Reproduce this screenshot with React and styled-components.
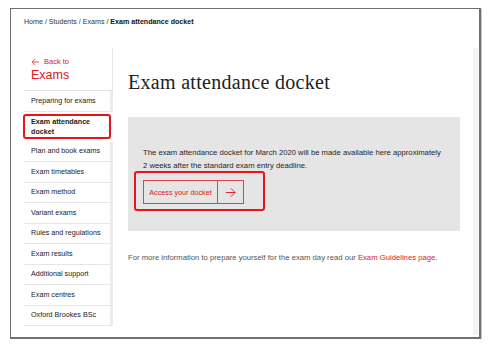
import React from "react";
import styled, { createGlobalStyle } from "styled-components";

const Global = createGlobalStyle`
  html, body { margin: 0; padding: 0; background: #fff; }
  body { font-family: "Liberation Sans", Arial, sans-serif; }
  * { box-sizing: border-box; }
`;

const Frame = styled.div`
  margin: 8px 0 0 10px;
  width: 471px;
  height: 331px;
  border: 1px solid #6e6e6e;
  border-right: 2px solid #707070;
  border-bottom: 2px solid #707070;
  box-shadow: 1px 1px 0 #c8c8c8;
  display: flex;
  flex-direction: column;
  padding: 0 0 0 13px;
  position: relative;
  overflow: hidden;
`;

const Breadcrumb = styled.div`
  height: 39px;
  padding-top: 9px;
  font-size: 7.1px;
  color: #333;
  line-height: 9px;
  b { color: #111; font-weight: bold; }
`;

const Body = styled.div`
  display: flex;
  flex: 1;
`;

const Sidebar = styled.nav`
  width: 89px;
  display: flex;
  flex-direction: column;
`;

const BackBlock = styled.div`
  height: 43px;
  padding: 8px 0 0 7px;
  border-right: 1px solid #e6e6e6;
  color: #e0141e;
  border-bottom: 1px solid #e3e3e3;
`;

const BackLink = styled.div`
  font-size: 7.5px;
  line-height: 11px;
  display: flex;
  align-items: center;
  gap: 4px;
`;

const BackTitle = styled.div`
  font-size: 12.5px;
  line-height: 15px;
  margin-top: 1px;
`;

const Item = styled.div`
  height: ${(p) => (p.$tall ? "30px" : "20.5px")};
  display: flex;
  align-items: center;
  padding-left: 7px;
  font-size: 7.2px;
  line-height: 10px;
  color: #222;
  font-weight: ${(p) => (p.$active ? "bold" : "normal")};
  border-bottom: ${(p) => (p.$active ? "none" : "1px solid #e6e6e6")};
  border-right: ${(p) => (p.$active ? "none" : "3px solid #ececec")};
  position: relative;
`;

const Highlight = styled.span`
  position: absolute;
  left: -1px;
  right: 2px;
  top: 2px;
  bottom: 3px;
  border: 2px solid #e8161c;
  border-radius: 3px;
`;

const Main = styled.main`
  margin-left: 15px;
  width: 332px;
  display: flex;
  flex-direction: column;
`;

const Title = styled.h1`
  margin: 22px 0 0 0;
  font-family: "Liberation Serif", "Times New Roman", serif;
  font-weight: normal;
  font-size: 20px;
  line-height: 24px;
  color: #222;
  letter-spacing: 0.3px;
`;

const Panel = styled.section`
  margin-top: 23px;
  background: #e5e5e5;
  height: 114px;
  padding: 29px 15px 0 15px;
`;

const PanelText = styled.p`
  margin: 0;
  font-size: 7.7px;
  line-height: 13px;
  color: #1e1e1e;
`;

const ButtonWrap = styled.div`
  position: relative;
  margin-top: 8px;
  width: 101px;
`;

const Button = styled.a`
  display: flex;
  height: 24px;
  width: 101px;
  border: 1px solid #d9454a;
  color: #e0141e;
  font-size: 7.2px;
`;

const ButtonLabel = styled.span`
  flex: 1;
  display: flex;
  align-items: center;
  justify-content: center;
  border-right: 1px solid #d9454a;
`;

const ButtonArrow = styled.span`
  width: 25px;
  display: flex;
  align-items: center;
  justify-content: center;
`;

const ButtonHighlight = styled.span`
  position: absolute;
  left: -9px;
  top: -9px;
  width: 131px;
  height: 40px;
  border: 2px solid #e8161c;
  border-radius: 3px;
`;

const Footer = styled.p`
  margin: 22px 0 0 0;
  font-size: 7.7px;
  line-height: 10px;
  color: #555;
  a { color: #e0141e; text-decoration: none; }
`;

const RightStrip = styled.div`
  position: absolute;
  right: 1px;
  top: 39px;
  bottom: 2px;
  width: 5px;
  background: #f3f3f3;
`;

const Arrow = ({ size = 10, w = 1 }) => (
  <svg width={size} height={size} viewBox="0 0 12 12" fill="none" stroke="currentColor" strokeWidth={w}>
    <path d="M1 6h10M6.5 1.5 11 6l-4.5 4.5" />
  </svg>
);

const BackArrow = () => (
  <svg width="9" height="8" viewBox="0 0 12 12" fill="none" stroke="currentColor" strokeWidth="1.1">
    <path d="M11 6H1M5.5 1.5 1 6l4.5 4.5" />
  </svg>
);

const items = [
  "Plan and book exams",
  "Exam timetables",
  "Exam method",
  "Variant exams",
  "Rules and regulations",
  "Exam results",
  "Additional support",
  "Exam centres",
  "Oxford Brookes BSc",
];

export default function App() {
  return (
    <>
      <Global />
      <Frame>
        <Breadcrumb>
          Home / Students / Exams / <b>Exam attendance docket</b>
        </Breadcrumb>
        <Body>
          <Sidebar>
            <BackBlock>
              <BackLink>
                <BackArrow /> Back to
              </BackLink>
              <BackTitle>Exams</BackTitle>
            </BackBlock>
            <Item>Preparing for exams</Item>
            <Item $tall $active>
              Exam attendance
              <br />
              docket
              <Highlight />
            </Item>
            {items.map((t) => (
              <Item key={t}>{t}</Item>
            ))}
          </Sidebar>
          <Main>
            <Title>Exam attendance docket</Title>
            <Panel>
              <PanelText>
                The exam attendance docket for March 2020 will be made available here approximately
                <br />2 weeks after the standard exam entry deadline.
              </PanelText>
              <ButtonWrap>
                <Button>
                  <ButtonLabel>Access your docket</ButtonLabel>
                  <ButtonArrow>
                    <Arrow size={11} w={1} />
                  </ButtonArrow>
                </Button>
                <ButtonHighlight />
              </ButtonWrap>
            </Panel>
            <Footer>
              For more information to prepare yourself for the exam day read our{" "}
              <a>Exam Guidelines page</a>.
            </Footer>
          </Main>
        </Body>
        <RightStrip />
      </Frame>
    </>
  );
}
